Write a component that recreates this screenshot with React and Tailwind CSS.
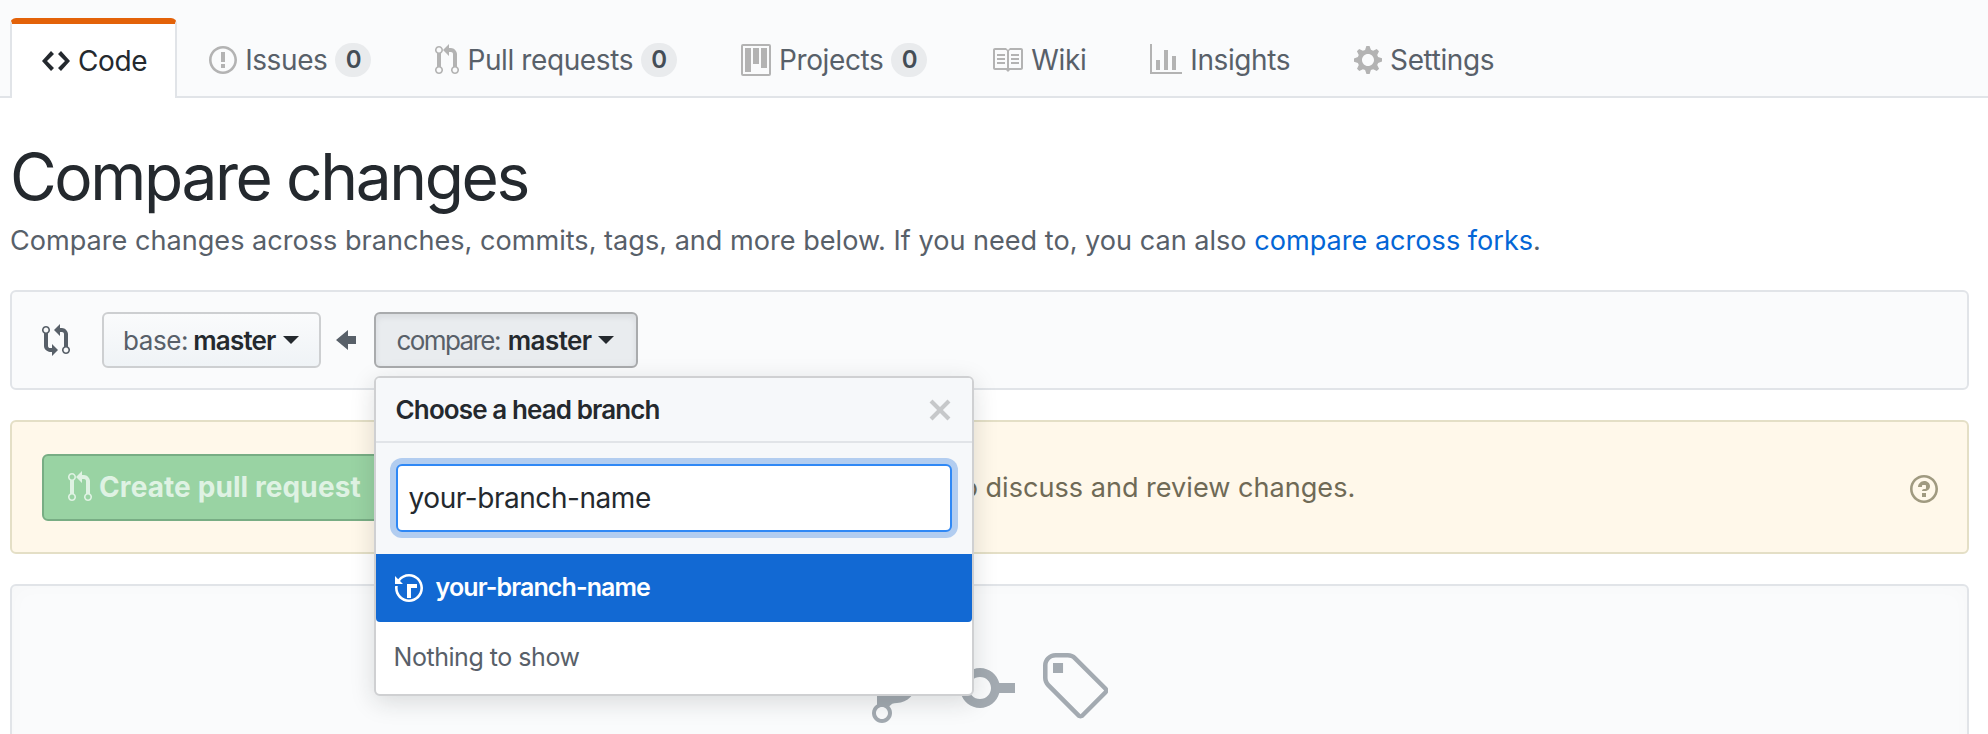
const ICONS = {
  code: 'M9.5 3L8 4.5 11.5 8 8 11.5 9.5 13 14 8 9.5 3zm-5 0L0 8l4.5 5L6 11.5 2.5 8 6 4.5 4.5 3z',
  issue: 'M7 2.3c3.14 0 5.7 2.56 5.7 5.7s-2.56 5.7-5.7 5.7A5.71 5.71 0 0 1 1.3 8c0-3.14 2.56-5.7 5.7-5.7zM7 1C3.14 1 0 4.14 0 8s3.14 7 7 7 7-3.14 7-7-3.14-7-7-7zm1 3H6v5h2V4zm0 6H6v2h2v-2z',
  pull: 'M11 11.28V5c-.03-.78-.34-1.47-.94-2.06C9.46 2.35 8.78 2.03 8 2H7V0L4 3l3 3V4h1c.27.02.48.11.69.31.21.2.3.42.31.69v6.28A1.993 1.993 0 0 0 10 15a1.993 1.993 0 0 0 1-3.72zm-1 2.92c-.66 0-1.2-.55-1.2-1.2 0-.65.55-1.2 1.2-1.2.65 0 1.2.55 1.2 1.2 0 .65-.55 1.2-1.2 1.2zM4 3c0-1.11-.89-2-2-2a1.993 1.993 0 0 0-1 3.72v6.56A1.993 1.993 0 0 0 2 15a1.993 1.993 0 0 0 1-3.72V4.72c.59-.34 1-.98 1-1.72zm-.8 10c0 .66-.55 1.2-1.2 1.2-.65 0-1.2-.55-1.2-1.2 0-.65.55-1.2 1.2-1.2.65 0 1.2.55 1.2 1.2zM2 4.2C1.34 4.2.8 3.65.8 3c0-.65.55-1.2 1.2-1.2.65 0 1.2.55 1.2 1.2 0 .65-.55 1.2-1.2 1.2z',
  project: 'M10 12h3V2h-3v10zm-4-2h3V2H6v8zm-4 4h3V2H2v12zm-1 1h13V1H1v14zM14 0H1a1 1 0 0 0-1 1v14a1 1 0 0 0 1 1h13a1 1 0 0 0 1-1V1a1 1 0 0 0-1-1z',
  book: 'M3 5h4v1H3V5zm0 3h4V7H3v1zm0 2h4V9H3v1zm11-5h-4v1h4V5zm0 2h-4v1h4V7zm0 2h-4v1h4V9zm2-6v9c0 .55-.45 1-1 1H9.5l-1 1-1-1H2c-.55 0-1-.45-1-1V3c0-.55.45-1 1-1h5.5l1 1 1-1H15c.55 0 1 .45 1 1zm-8 .5L7.5 3H2v9h6V3.5zm7-.5H9.5l-.5.5V12h6V3z',
  graph: 'M16 14v1H0V0h1v14h15zM5 13H3V8h2v5zm4 0H7V3h2v10zm4 0h-2V6h2v7z',
  gear: 'M14 8.77v-1.6l-1.94-.64-.45-1.09.88-1.84-1.13-1.13-1.81.91-1.09-.45-.69-1.92h-1.6l-.63 1.94-1.11.45-1.84-.88-1.13 1.13.91 1.81-.45 1.09L0 7.23v1.59l1.94.64.45 1.09-.88 1.84 1.13 1.13 1.81-.91 1.09.45.69 1.92h1.59l.63-1.94 1.11-.45 1.84.88 1.13-1.13-.92-1.81.47-1.09L14 8.75v.02zM7 11c-1.66 0-3-1.34-3-3s1.34-3 3-3 3 1.34 3 3-1.34 3-3 3z',
  compare: 'M5 12H4c-.27-.02-.48-.11-.69-.31-.21-.2-.3-.42-.31-.69V4.72A1.993 1.993 0 0 0 2 1a1.993 1.993 0 0 0-1 3.72V11c.03.78.34 1.47.94 2.06.6.59 1.28.91 2.06.94h1v2l3-3-3-3v2zM2 1.8c.66 0 1.2.55 1.2 1.2 0 .65-.55 1.2-1.2 1.2C1.34 4.2.8 3.65.8 3c0-.65.55-1.2 1.2-1.2zm11 9.48V5c-.03-.78-.34-1.47-.94-2.06-.6-.59-1.28-.91-2.06-.94H9V0L6 3l3 3V4h1c.27.02.48.11.69.31.21.2.3.42.31.69v6.28A1.993 1.993 0 0 0 12 15a1.993 1.993 0 0 0 1-3.72zm-1 2.92c-.66 0-1.2-.55-1.2-1.2 0-.65.55-1.2 1.2-1.2.65 0 1.2.55 1.2 1.2 0 .65-.55 1.2-1.2 1.2z',
  arrow: 'M6 3L0 8l6 5v-3h4V6H6V3z',
  x: 'M7.48 8l3.75 3.75-1.48 1.48L6 9.48l-3.75 3.75-1.48-1.48L4.52 8 .77 4.25l1.48-1.48L6 6.52l3.75-3.75 1.48 1.48L7.48 8z',
  question: 'M6 10h2v2H6v-2zm4-3.5C10 8.64 8 9 8 9H6c0-.55.45-1 1-1h.5c.28 0 .5-.22.5-.5v-1c0-.28-.22-.5-.5-.5h-1c-.28 0-.5.22-.5.5V7H4c0-1.5 1.5-3 3-3s3 1 3 2.5zM7 2.3c3.14 0 5.7 2.56 5.7 5.7S10.14 13.7 7 13.7 1.3 11.14 1.3 8 3.86 2.3 7 2.3zM7 1C3.14 1 0 4.14 0 8s3.14 7 7 7 7-3.14 7-7-3.14-7-7-7z',
  branch: 'M10 5c0-1.11-.89-2-2-2a1.993 1.993 0 0 0-1 3.72v.3c-.02.52-.23.98-.63 1.38-.4.4-.86.61-1.38.63-.83.02-1.48.16-2 .45V4.72a1.993 1.993 0 0 0-1-3.72C.88 1 0 1.89 0 3a2 2 0 0 0 1 1.72v6.56c-.59.35-1 .99-1 1.72 0 1.11.89 2 2 2 1.11 0 2-.89 2-2 0-.53-.2-1-.53-1.36.09-.06.48-.41.59-.47.25-.11.56-.17.94-.17 1.05-.05 1.95-.45 2.75-1.25S8.95 7.77 9 6.73h-.02C9.59 6.37 10 5.73 10 5zM2 1.8c.66 0 1.2.55 1.2 1.2 0 .65-.55 1.2-1.2 1.2C1.34 4.2.8 3.65.8 3c0-.65.55-1.2 1.2-1.2zm0 12.41c-.66 0-1.2-.55-1.2-1.2 0-.65.55-1.2 1.2-1.2.65 0 1.2.55 1.2 1.2 0 .65-.55 1.2-1.2 1.2zm6-8c-.66 0-1.2-.55-1.2-1.2 0-.65.55-1.2 1.2-1.2.65 0 1.2.55 1.2 1.2 0 .65-.55 1.2-1.2 1.2z',
  commit: 'M10.86 7c-.45-1.72-2-3-3.86-3-1.86 0-3.41 1.28-3.86 3H0v2h3.14c.45 1.72 2 3 3.86 3 1.86 0 3.41-1.28 3.86-3H14V7h-3.14zM7 10.2c-1.22 0-2.2-.98-2.2-2.2 0-1.22.98-2.2 2.2-2.2 1.22 0 2.2.98 2.2 2.2 0 1.22-.98 2.2-2.2 2.2z',
  tag: 'M7.73 1.73C7.26 1.26 6.62 1 5.96 1H3.5C2.13 1 1 2.13 1 3.5v2.47c0 .66.27 1.3.73 1.77l6.06 6.06c.39.39 1.02.39 1.41 0l4.59-4.59a.996.996 0 0 0 0-1.41L7.73 1.73zM2.38 7.09c-.31-.3-.47-.7-.47-1.13V3.5c0-.88.72-1.59 1.59-1.59h2.47c.42 0 .83.16 1.13.47l6.14 6.13-4.73 4.73-6.13-6.15zM3.01 3h2v2H3V3h.01z',
  history: 'M8 13H6V6h5v2H8v5zM7 1C4.81 1 2.87 2.02 1.59 3.59L0 2v4h4L2.5 4.5C3.55 3.17 5.17 2.3 7 2.3c3.14 0 5.7 2.56 5.7 5.7s-2.56 5.7-5.7 5.7A5.71 5.71 0 0 1 1.3 8c0-.34.03-.67.09-1H.08C.03 7.33 0 7.66 0 8c0 3.86 3.14 7 7 7s7-3.14 7-7-3.14-7-7-7z',
};

function Icon({ name, vb, className }) {
  return (
    <svg viewBox={`0 0 ${vb} 16`} className={`shrink-0 fill-current ${className}`}>
      <path fillRule="evenodd" d={ICONS[name]} />
    </svg>
  );
}

function Counter() {
  return (
    <span className="ml-[8px] flex h-[34px] w-[36px] items-center justify-center rounded-full bg-[#e9ebed] text-[24px] font-semibold text-[#444d56]">
      0
    </span>
  );
}

function Tab({ icon, vb, iconW, label, count }) {
  return (
    <div className="flex h-[80px] items-center px-[32px] pt-[4px]">
      <Icon name={icon} vb={vb} className={`${iconW} h-[32px] text-[#b3b3b3]`} />
      <span className="ml-[8px] text-[#586069]">{label}</span>
      {count && <Counter />}
    </div>
  );
}

function Caret() {
  return <span className="ml-[7px] inline-block h-0 w-0 border-x-[8px] border-t-[8px] border-x-transparent border-t-[#24292e]" />;
}

export default function App() {
  return (
    <div className="relative h-[734px] overflow-hidden bg-white font-['Inter','Liberation_Sans',sans-serif] text-[27.1px] text-[#24292e]">
      {/* Repo nav */}
      <nav className="flex h-[98px] border-b-2 border-[#e1e4e8] bg-[#fafbfc] pl-[10px] pt-[18px] text-[28px] tracking-[-0.4px]">
        <div className="flex h-[80px] items-center rounded-t-[6px] border-x-2 border-t-[6px] border-x-[#e1e4e8] border-t-[#e36209] bg-white pl-[30px] pr-[28px]">
          <Icon name="code" vb={14} className="h-[32px] w-[28px] text-[#24292e]" />
          <span className="ml-[8px]">Code</span>
        </div>
        <Tab icon="issue" vb={14} iconW="w-[28px]" label="Issues" count />
        <Tab icon="pull" vb={12} iconW="w-[24px]" label="Pull requests" count />
        <Tab icon="project" vb={15} iconW="w-[30px]" label="Projects" count />
        <Tab icon="book" vb={16} iconW="w-[32px]" label="Wiki" />
        <Tab icon="graph" vb={16} iconW="w-[32px]" label="Insights" />
        <Tab icon="gear" vb={14} iconW="w-[28px]" label="Settings" />
      </nav>

      <div className="pl-[10px] pr-[19px]">
        <h1 className="mt-[43px] text-[64px] font-normal leading-[72px] tracking-[-2.4px]">Compare changes</h1>
        <p className="mt-[10px] leading-[36px] text-[#586069]">
          Compare changes across branches, commits, tags, and more below. If you need to, you can also{' '}
          <span className="text-[#0366d6]">compare across forks</span>.
        </p>

        {/* Range editor */}
        <div className="mt-[31px] flex h-[100px] items-center rounded-[6px] border-2 border-[#e1e4e8] bg-[#fafbfc] pl-[30px] text-[26px]">
          <Icon name="compare" vb={14} className="h-[32px] w-[28px] text-[#586069]" />
          <div className="ml-[32px] flex h-[56px] items-center rounded-[6px] border-2 border-[#cdcfd1] bg-gradient-to-b from-[#fafbfc] to-[#eff3f6] pl-[19px] pr-[20px] text-[#586069]">
            <span className="tracking-[-0.4px]">base:</span>
            <b className="ml-[5px] font-semibold tracking-[-0.8px] text-[#24292e]">master</b>
            <Caret />
          </div>
          <Icon name="arrow" vb={10} className="ml-[15px] mr-[18px] h-[32px] w-[20px] text-[#586069]" />
          <div className="relative">
            <div className="flex h-[56px] items-center rounded-[6px] border-2 border-[#a9abad] bg-[#e9ecef] pl-[21px] pr-[22px] text-[#586069] shadow-[inset_0_3px_6px_rgba(27,31,35,0.08)]">
              <span className="tracking-[-1.6px]">compare:</span>
              <b className="ml-[8px] font-semibold tracking-[-0.6px] text-[#24292e]">master</b>
              <Caret />
            </div>

            {/* Branch picker */}
            <div className="absolute left-0 top-[64px] z-10 w-[600px] overflow-hidden rounded-[6px] border-2 border-[#cfd0d2] bg-white shadow-[0_6px_24px_rgba(27,31,35,0.15)]">
              <div className="flex h-[65px] items-center justify-between border-b-2 border-[#e1e4e8] bg-[#f6f8fa] pl-[20px] pr-[20px]">
                <span className="font-semibold tracking-[-0.9px]">Choose a head branch</span>
                <Icon name="x" vb={12} className="h-[32px] w-[24px] text-[#c6c8ca]" />
              </div>
              <div className="bg-[#f6f8fa] px-[20px] pb-[22px] pt-[21px]">
                <div className="flex h-[68px] items-center rounded-[6px] border-2 border-[#2f88f5] bg-white pl-[11px] text-[28px] tracking-[-0.45px] shadow-[0_0_0_6px_#b2cdf0]">
                  your-branch-name
                </div>
              </div>
              <div className="flex h-[68px] items-center rounded-b-[4px] bg-[#1269d3] pl-[19px] text-[25px] font-semibold tracking-[-0.9px] text-white">
                <Icon name="history" vb={14} className="h-[32px] w-[28px]" />
                <span className="ml-[13px]">your-branch-name</span>
              </div>
              <div className="flex h-[72px] items-center pl-[18px] text-[25px] tracking-[-0.47px] text-[#586069]">Nothing to show</div>
            </div>
          </div>
        </div>

        {/* Create PR box */}
        <div className="mt-[30px] flex h-[134px] items-center rounded-[6px] border-2 border-[#e4dfc6] bg-[#fff8ea] pl-[30px] pr-[29px]">
          <div className="flex h-[67px] w-[350px] items-center rounded-[6px] border-2 border-[#78ad84] bg-[#99d3a3] pl-[24px] text-[28px] font-bold tracking-[0.1px] text-[#dff2e3]">
            <Icon name="pull" vb={12} className="h-[32px] w-[24px]" />
            <span className="ml-[7px] whitespace-nowrap">Create pull request</span>
          </div>
          <span className="ml-[20px] pt-[2px] text-[#6f6a56]">Choose different branches or forks above to discuss and review changes.</span>
          <Icon name="question" vb={14} className="ml-auto mt-[3px] h-[32px] w-[28px] text-[#a09a80]" />
        </div>

        {/* Blankslate */}
        <div className="mt-[30px] flex h-[200px] justify-center gap-[23px] rounded-[6px] border-2 border-[#e1e4e8] bg-[#fafbfc] pt-[62px] shadow-[inset_0_0_20px_rgba(27,31,35,0.02)]">
          <Icon name="branch" vb={10} className="h-[80px] w-[50px] text-[#a3aab1]" />
          <Icon name="commit" vb={14} className="h-[80px] w-[70px] text-[#a3aab1]" />
          <Icon name="tag" vb={14} className="h-[80px] w-[70px] text-[#a3aab1]" />
        </div>
      </div>
    </div>
  );
}
